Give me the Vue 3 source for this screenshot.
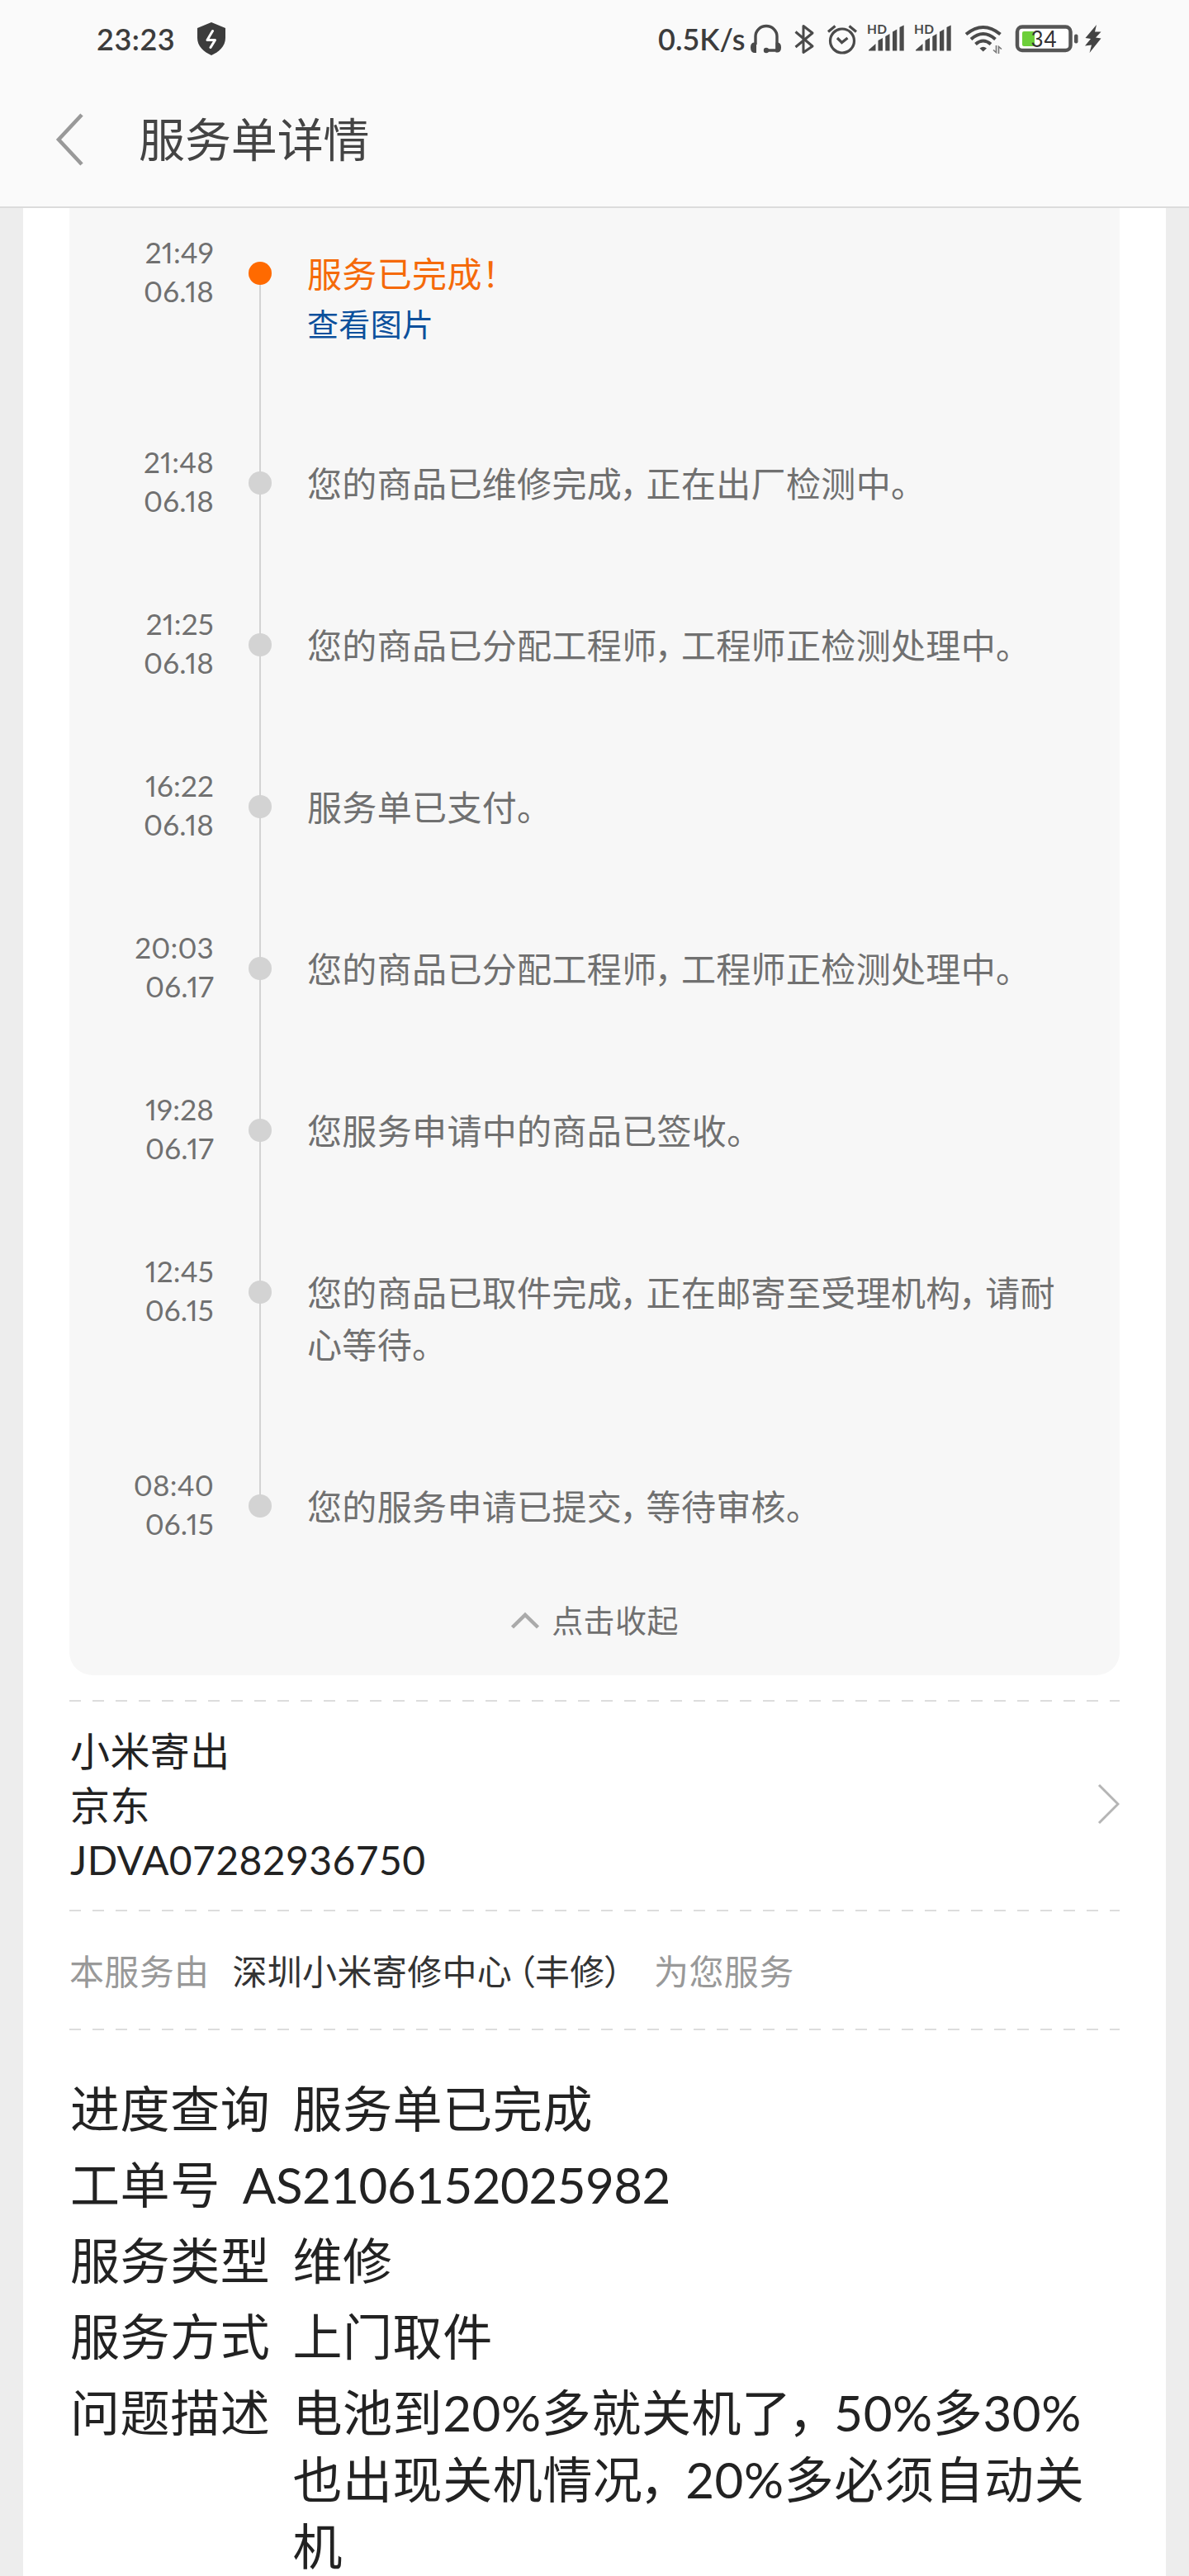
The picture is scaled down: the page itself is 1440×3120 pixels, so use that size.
<template>
  <div class="page">
    <header class="header">
      <div class="status-bar">
        <span class="clock">23:23</span>
        <svg class="shield" width="36" height="42" viewBox="0 0 36 42">
          <path d="M18 1 L35 8 V20 C35 30 27 37 18 41 C9 37 1 30 1 20 V8 Z" fill="#3c3c3c" />
          <path d="M19.500 11.500 L13 22.500 H22.500 L17 31.500" fill="none" stroke="#fff" stroke-width="3" stroke-linecap="round" stroke-linejoin="round" />
        </svg>
        <span class="speed">0.5K/s</span>
        <svg class="status-icons" width="430" height="50" viewBox="905 22 430 50">
          <!-- headset -->
          <g fill="none" stroke="#4a4a4a" stroke-width="3.4">
            <path d="M915 54 V44 A13 12.500 0 0 1 941 44 V61 H928" />
          </g>
          <path d="M916 51.500 V64 H913 Q909 63 909 57.500 Q909 52 913 51.500 Z M939.500 51.500 V63.500 H942 Q946 63 946 57.500 Q946 52 942 51.500 Z" fill="#4a4a4a" />
          <circle cx="928" cy="61" r="3.200" fill="#4a4a4a" />
          <!-- bluetooth -->
          <path d="M963.500 38.500 L984 56 L973 63.500 V31.500 L984 40 L963.500 57" fill="none" stroke="#4a4a4a" stroke-width="3" stroke-linejoin="round" />
          <!-- alarm -->
          <g fill="none" stroke="#4a4a4a" stroke-width="3.200">
            <circle cx="1020" cy="49.500" r="14.500" />
            <path d="M1014 46 L1019.500 51.500 L1026.500 46 M1003 38.500 L1011.500 31.500 M1028.500 31.500 L1037 38.500" />
          </g>
          <!-- two sim signals -->
          <g v-for="x in [0, 57]" :key="x" :transform="`translate(${x} 0)`" fill="#4a4a4a">
            <text class="hd" x="1050" y="41" textLength="24">HD</text>
            <path d="M1052 61.500 V60.500 L1060.500 53 V61.500 Z M1063.500 61.500 V49 L1069 46 V61.500 Z M1072.300 61.500 V44 L1077.500 41 V61.500 Z M1081 61.500 V38.500 L1086.300 35.500 V61.500 Z M1089.500 61.500 V33 L1094.700 30.500 V61.500 Z" />
          </g>
          <!-- wifi -->
          <g fill="none" stroke="#4a4a4a" stroke-width="4">
            <path d="M1170 41.500 Q1190.700 24.500 1211.500 41.500" />
            <path d="M1176 47.500 Q1190.700 34.500 1205.500 47.500" />
            <path d="M1181.500 53.500 Q1190.700 45.500 1200 53.500" />
          </g>
          <path d="M1186.500 58.500 Q1190.700 55 1195 58.500 L1190.700 62.500 Z" fill="#4a4a4a" />
          <path d="M1203 60.500 L1206.500 63.500 V55 M1209.500 65 V56.500 L1213 59.500" fill="none" stroke="#777" stroke-width="1.600" />
          <!-- battery -->
          <rect x="1232" y="32.500" width="64.500" height="28.500" rx="6" fill="#fff" stroke="#555" stroke-width="4.500" />
          <rect x="1238" y="38" width="15" height="18" rx="2" fill="#6dcf3a" />
          <text class="level" x="1248.500" y="56.500" textLength="31">34</text>
          <rect x="1301" y="41.500" width="4.500" height="11" rx="2" fill="#555" />
          <path d="M1328 30 L1314.500 46 L1321 47 L1314 55.500 L1322 54.500 L1319.500 64 L1333.500 46.500 L1327 45.500 L1333.500 38.500 L1326 38.500 Z" fill="#444" />
        </svg>
      </div>
      <div class="nav-bar">
        <svg width="36" height="66" viewBox="0 0 36 66">
          <path d="M33 3 L5 33 L33 63" fill="none" stroke="#999" stroke-width="4.600" />
        </svg>
        <h1>服务单详情</h1>
      </div>
    </header>

    <main class="panel">
      <section class="progress">
        <div v-for="(step, index) in steps" :key="index" class="step" :class="{ active: index === 0 }">
          <div class="time">
            <div>{{ step.time }}</div>
            <div>{{ step.date }}</div>
          </div>
          <div class="track"><i class="dot"></i></div>
          <div class="content">
            <p v-for="line in step.text.split('\n')" :key="line"><span v-for="(part, i) in splitText(line)" :key="i" :class="part.type">{{ part.value }}</span></p>
            <a v-if="step.link">{{ step.link }}</a>
          </div>
        </div>
        <div class="collapse">
          <svg width="36" height="24" viewBox="0 0 36 24">
            <path d="M2.500 20 L18 5 L33.500 20" fill="none" stroke="#aaa" stroke-width="4.500" />
          </svg>
          <span>点击收起</span>
        </div>
      </section>

      <div class="dashed"></div>
      <section class="express">
        <div>
          <p>小米寄出</p>
          <p>京东</p>
          <p>JDVA07282936750</p>
        </div>
        <svg width="28" height="50" viewBox="0 0 28 50">
          <path d="M3 2 L26 25 L3 48" fill="none" stroke="#b5b5b5" stroke-width="3" />
        </svg>
      </section>

      <div class="dashed"></div>
      <section class="provider">
        <span>本服务由</span>
        <span class="name"><span v-for="(part, i) in splitText('深圳小米寄修中心（丰修）')" :key="i" :class="part.type">{{ part.value }}</span></span>
        <span>为您服务</span>
      </section>

      <div class="dashed"></div>
      <section class="details">
        <div v-for="row in details" :key="row.label" class="row">
          <div class="label">{{ row.label }}</div>
          <div class="value" :class="{ code: row.code }">
            <p v-for="line in row.value.split('\n')" :key="line"><span v-for="(part, i) in splitText(line)" :key="i" :class="part.type">{{ part.value }}</span></p>
          </div>
        </div>
      </section>
    </main>
  </div>
</template>

<script setup>
const steps = [
  { time: '21:49', date: '06.18', text: '服务已完成！', link: '查看图片' },
  { time: '21:48', date: '06.18', text: '您的商品已维修完成，正在出厂检测中。' },
  { time: '21:25', date: '06.18', text: '您的商品已分配工程师，工程师正检测处理中。' },
  { time: '16:22', date: '06.18', text: '服务单已支付。' },
  { time: '20:03', date: '06.17', text: '您的商品已分配工程师，工程师正检测处理中。' },
  { time: '19:28', date: '06.17', text: '您服务申请中的商品已签收。' },
  { time: '12:45', date: '06.15', text: '您的商品已取件完成，正在邮寄至受理机构，请耐\n心等待。' },
  { time: '08:40', date: '06.15', text: '您的服务申请已提交，等待审核。' }
]

const details = [
  { label: '进度查询', value: '服务单已完成' },
  { label: '工单号', value: 'AS2106152025982', code: true },
  { label: '服务类型', value: '维修' },
  { label: '服务方式', value: '上门取件' },
  { label: '问题描述', value: '电池到20%多就关机了，50%多30%\n也出现关机情况，20%多必须自动关\n机' }
]

const types = { '，': 'comma', '（': 'open', '）': 'close' }

// full-width punctuation is set tighter than the characters around it
const splitText = (text) =>
  text
    .split(/([，（）])/)
    .filter(Boolean)
    .map((value) => ({ value, type: types[value] || 'plain' }))
</script>

<style>
body {
  margin: 0;
  background: #ededed;
}
</style>

<style scoped>
.page {
  width: 1440px;
  height: 3120px;
  overflow: hidden;
  display: flex;
  flex-direction: column;
  background: #ededed;
  font-family: Lato, "Noto Sans CJK SC", sans-serif;
  color: #222;
}

p,
h1 {
  margin: 0;
  font-weight: 400;
}

svg {
  display: block;
  flex: none;
}

.header {
  flex: none;
  box-sizing: border-box;
  height: 252px;
  background: #fafafa;
  border-bottom: 2px solid #dcdcdc;
}

.status-bar {
  display: flex;
  align-items: center;
  height: 94px;
  padding-left: 117px;
  font-size: 36px;
  font-weight: 600;
  color: #3c3c3c;
}

.clock {
  width: 121px;
  letter-spacing: 0.5px;
}

.speed {
  width: 108px;
  margin-left: 523px;
}

.hd {
  font-size: 15.5px;
  font-weight: 700;
}

.level {
  font-size: 26px;
  font-weight: 400;
  fill: #333;
}

.nav-bar {
  display: flex;
  align-items: center;
  height: 150px;
  padding-left: 66px;
}

.nav-bar h1 {
  margin-left: 66px;
  font-size: 56px;
  line-height: 80px;
  letter-spacing: -0.1px;
  color: #444;
}

.panel {
  flex: 1;
  min-height: 0;
  margin: 0 28px;
  padding: 0 56px;
  background: #fff;
}

.progress {
  padding-top: 30px;
  border-radius: 0 0 28px 28px;
  background: #f7f7f7;
  color: #707070;
}

.step {
  display: grid;
  grid-template-columns: 175px 113px 930px;
}

.time {
  font-size: 35px;
  line-height: 47px;
  text-align: right;
  letter-spacing: 0.2px;
  font-variant-numeric: proportional-nums;
}

/* the rail runs from the middle of one dot to the next */
.track {
  position: relative;
}

.track::before {
  content: "";
  position: absolute;
  top: 49px;
  bottom: -49px;
  left: 55px;
  width: 2px;
  background: #d3d3d3;
}

.step:nth-child(8) .track::before {
  display: none;
}

.dot {
  position: absolute;
  top: 35px;
  left: 42px;
  width: 28px;
  height: 28px;
  border-radius: 50%;
  background: #d3d3d3;
}

.content {
  padding: 19px 0 114px;
  font-size: 42px;
  line-height: 63px;
  letter-spacing: 0.35px;
  white-space: nowrap;
}

.step:nth-child(8) .content {
  padding-bottom: 12px;
}

.content a {
  display: block;
  font-size: 38px;
  line-height: 56px;
  padding-bottom: 2px;
  color: #0c509c;
}

.active p {
  color: #f56a0a;
}

.active .dot {
  background: #ff6a00;
}

.comma,
.open,
.close {
  font-feature-settings: "palt";
}

.comma,
.close {
  letter-spacing: 0.2em;
}

.open {
  margin-left: 0.15em;
}

.collapse {
  display: flex;
  justify-content: center;
  align-items: center;
  gap: 14px;
  padding: 65px 0 38px;
  font-size: 38px;
  line-height: 57px;
  letter-spacing: 0.4px;
}

.dashed {
  height: 2px;
  background: repeating-linear-gradient(90deg, #ddd 0 14px, transparent 14px 28px);
}

.progress + .dashed {
  margin-top: 30px;
}

.express {
  display: flex;
  justify-content: space-between;
  align-items: center;
  padding: 27px 0 27px 1px;
  font-size: 48px;
  line-height: 66px;
  letter-spacing: 0.4px;
}

.express svg {
  margin-bottom: 5px;
}

.provider {
  display: flex;
  align-items: center;
  gap: 28px;
  box-sizing: border-box;
  height: 142px;
  padding-bottom: 2px;
  font-size: 42px;
  letter-spacing: 0.35px;
  color: #999;
}

.provider .name {
  color: #333;
}

.provider .close {
  letter-spacing: 0.25em;
}

.details {
  display: flex;
  flex-direction: column;
  gap: 11px;
  padding: 55px 0 0 1px;
  font-size: 60px;
  line-height: 81px;
  letter-spacing: 0.6px;
  white-space: nowrap;
}

.row {
  display: flex;
  gap: 27px;
}

.label {
  flex: none;
}

.value .comma {
  letter-spacing: 0.36em;
}

.code {
  letter-spacing: -0.5px;
}
</style>
